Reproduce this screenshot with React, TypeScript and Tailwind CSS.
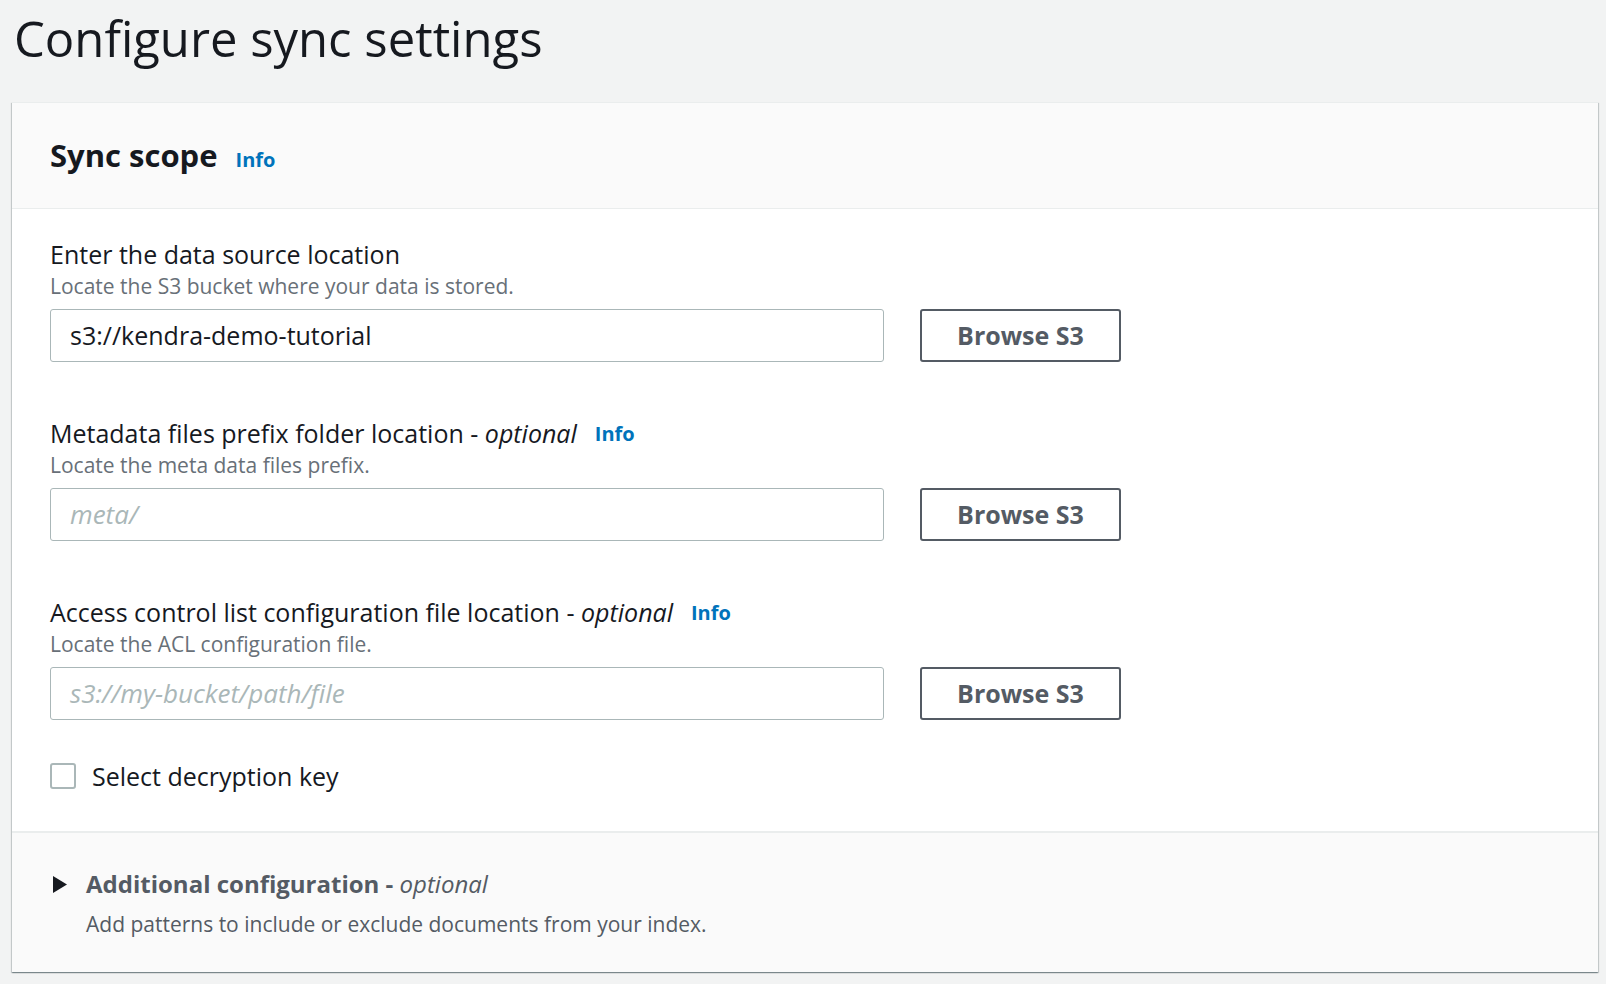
const font = "font-['Open_Sans','Lato',sans-serif]";

interface FieldProps {
  label: string;
  optional?: boolean;
  info?: boolean;
  description: string;
  value?: string;
  placeholder?: string;
}

const InfoLink = () => (
  <span className="ml-[18px] text-[20px] font-bold text-[#0073bb]">Info</span>
);

const Field = ({ label, optional, info, description, value, placeholder }: FieldProps) => {
  return (
    <div className="flex flex-col">
      <div className="flex h-[30px] items-center text-[25px] text-[#16191f]">
        <span>
          {label}
          {optional && (
            <>
              {" - "}
              <i>optional</i>
            </>
          )}
        </span>
        {info && <InfoLink />}
      </div>
      <p className="h-[32px] text-[21px] leading-[32px] text-[#687078]">{description}</p>
      <div className="mt-[7px] flex items-center gap-[36px]">
        <div className="flex h-[53px] w-[834px] items-center rounded-[3px] border border-[#aab7b8] bg-white px-[19px]">
          {value ? (
            <span className="text-[25px] text-[#16191f]">{value}</span>
          ) : (
            <span className="text-[26px] italic text-[#aab7b8]">{placeholder}</span>
          )}
        </div>
        <button className="flex h-[53px] w-[201px] items-center justify-center rounded-[3px] border-2 border-[#545b64] bg-white text-[25px] font-bold text-[#545b64]">
          Browse S3
        </button>
      </div>
    </div>
  );
};

export default function App() {
  return (
    <div className={`min-h-[984px] bg-[#f2f3f3] pl-[12px] pr-[8px] ${font}`}>
      <h1 className="h-[102px] pl-[2px] pt-[6px] text-[49px] leading-[64px] text-[#16191f]">
        Configure sync settings
      </h1>
      <div className="border-t border-[#eaeded] bg-white shadow-[0_1px_1px_0_rgba(0,28,36,0.3),1px_1px_1px_0_rgba(0,28,36,0.15),-1px_1px_1px_0_rgba(0,28,36,0.15)]">
        <div className="flex h-[106px] items-center border-b border-[#eaeded] bg-[#fafafa] px-[38px]">
          <div className="flex items-baseline">
            <h2 className="text-[31px] font-bold text-[#16191f]">Sync scope</h2>
            <InfoLink />
          </div>
        </div>
        <div className="flex flex-col gap-[57px] px-[38px] pt-[31px]">
          <Field
            label="Enter the data source location"
            description="Locate the S3 bucket where your data is stored."
            value="s3://kendra-demo-tutorial"
          />
          <Field
            label="Metadata files prefix folder location"
            optional
            info
            description="Locate the meta data files prefix."
            placeholder="meta/"
          />
          <Field
            label="Access control list configuration file location"
            optional
            info
            description="Locate the ACL configuration file."
            placeholder="s3://my-bucket/path/file"
          />
        </div>
        <div className="flex items-center gap-[16px] px-[38px] pb-[42px] pt-[43px]">
          <span className="h-[26px] w-[26px] shrink-0 rounded-[3px] border-2 border-[#aab7b8] bg-white" />
          <span className="text-[25px] leading-[26px] text-[#16191f]">Select decryption key</span>
        </div>
        <div className="h-[141px] border-t-2 border-[#eaeded] bg-[#fafafa] px-[40px] pt-[34px]">
          <div className="flex h-[34px] items-center gap-[18px]">
            <svg width="16" height="17" viewBox="0 0 16 17">
              <path d="M1 0 L15 8.5 L1 17 Z" fill="#16191f" />
            </svg>
            <span className="text-[24px] font-bold text-[#545b64]">
              Additional configuration - <i className="font-normal">optional</i>
            </span>
          </div>
          <p className="ml-[34px] mt-[9px] text-[21px] leading-[28px] text-[#545b64]">
            Add patterns to include or exclude documents from your index.
          </p>
        </div>
      </div>
    </div>
  );
}
